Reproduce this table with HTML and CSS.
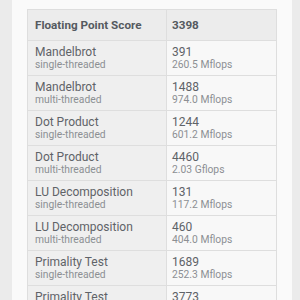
FILE: index.html
```html
<!DOCTYPE html>
<html>
<head>
<meta charset="utf-8">
<link rel="stylesheet" href="styles.css">
</head>
<body>
<div class="page">
  <div class="panel">
    <table class="scores">
      <thead>
        <tr><th class="name">Floating Point Score</th><th class="val">3398</th></tr>
      </thead>
      <tbody>
        <tr><td class="name"><div class="t">Mandelbrot</div><div class="s">single-threaded</div></td><td class="val"><div class="t">391</div><div class="s">260.5 Mflops</div></td></tr>
        <tr><td class="name"><div class="t">Mandelbrot</div><div class="s">multi-threaded</div></td><td class="val"><div class="t">1488</div><div class="s">974.0 Mflops</div></td></tr>
        <tr><td class="name"><div class="t">Dot Product</div><div class="s">single-threaded</div></td><td class="val"><div class="t">1244</div><div class="s">601.2 Mflops</div></td></tr>
        <tr><td class="name"><div class="t">Dot Product</div><div class="s">multi-threaded</div></td><td class="val"><div class="t">4460</div><div class="s">2.03 Gflops</div></td></tr>
        <tr><td class="name"><div class="t">LU Decomposition</div><div class="s">single-threaded</div></td><td class="val"><div class="t">131</div><div class="s">117.2 Mflops</div></td></tr>
        <tr><td class="name"><div class="t">LU Decomposition</div><div class="s">multi-threaded</div></td><td class="val"><div class="t">460</div><div class="s">404.0 Mflops</div></td></tr>
        <tr><td class="name"><div class="t">Primality Test</div><div class="s">single-threaded</div></td><td class="val"><div class="t">1689</div><div class="s">252.3 Mflops</div></td></tr>
        <tr><td class="name"><div class="t">Primality Test</div><div class="s">multi-threaded</div></td><td class="val"><div class="t">3773</div><div class="s">1.52 Gflops</div></td></tr>
      </tbody>
    </table>
  </div>
</div>
</body>
</html>
```
FILE: styles.css
```css
html, body {
  margin: 0;
  padding: 0;
  height: 300px;
  overflow: hidden;
  background: #ebebeb;
  font-family: Roboto, "Liberation Sans", sans-serif;
}
.page {
  padding: 0 8px 0 12px;
}
.panel {
  background: #fafafa;
  padding: 9px 16px 0 15px;
  height: 300px;
  box-sizing: border-box;
  overflow: hidden;
}
.scores {
  width: 250px;
  border-collapse: collapse;
  table-layout: fixed;
}
.scores th, .scores td {
  border: 1px solid #dedede;
  text-align: left;
  vertical-align: middle;
}
.scores th {
  background: #ececec;
  height: 30px;
  padding: 0 0 0 7px;
  font-size: 11.7px;
  font-weight: bold;
  color: #555a60;
}
.scores th.name { width: 131px; padding-left: 7px; }
.scores th.val { padding-left: 5px; }
.scores td {
  height: 34px;
  padding: 0 0 0 7px;
}
.scores td.name { background: #efefef; }
.scores td.val { background: #f8f8f8; padding-left: 5px; }
.t {
  font-size: 12px;
  line-height: 13px;
  color: #5f6368;
}
.s {
  font-size: 10.3px;
  line-height: 12px;
  color: #8c8f93;
}
```
